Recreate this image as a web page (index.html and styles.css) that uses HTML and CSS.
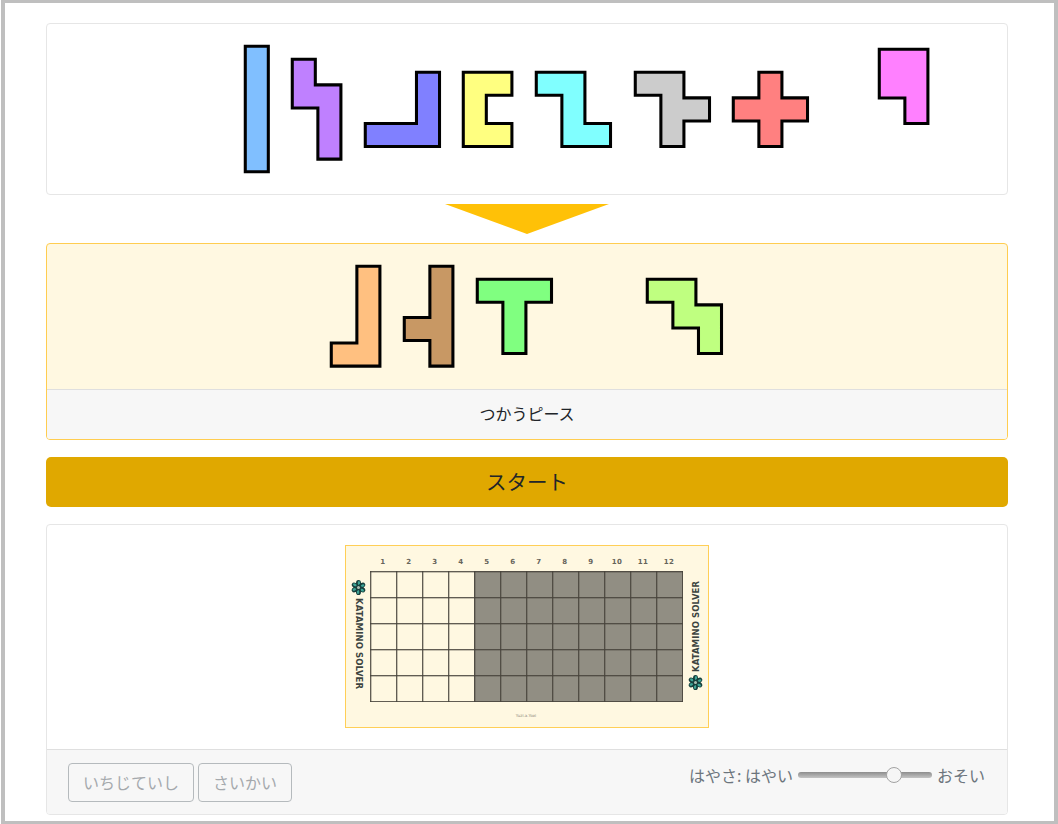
FILE: index.html
```html
<!DOCTYPE html>
<html lang="ja">
<head>
    <meta charset="UTF-8">
    <meta name="viewport" content="width=device-width, initial-scale=1.0">
    <title>Katamino Solver</title>
    <link rel="stylesheet" href="styles.css">
</head>
<body>

<!-- Flower used on both sides of the board -->
<svg class="defs" width="0" height="0">
    <symbol id="flower" viewBox="-10 -10 20 20">
        <g id="petals">
            <ellipse cx="0" cy="-5.5" rx="3.4" ry="4.5" fill="#173f3c"/>
            <ellipse cx="0.6" cy="-6" rx="1.6" ry="2.6" fill="#3fa596"/>
        </g>
        <use href="#petals" transform="rotate(60)"/>
        <use href="#petals" transform="rotate(120)"/>
        <use href="#petals" transform="rotate(180)"/>
        <use href="#petals" transform="rotate(240)"/>
        <use href="#petals" transform="rotate(300)"/>
        <circle r="2" fill="#a9bdb0"/>
    </symbol>
</svg>

<div class="frame">

    <!-- Unused pieces -->
    <div class="card">
        <div class="pieces pieces-all">
            <svg class="piece" width="25.6" height="128" viewBox="0 0 100 500"><polygon fill="#80bfff" points="5,5 95,5 95,495 5,495"/></svg>
            <svg class="piece" width="51.2" height="102.4" viewBox="0 0 200 400"><polygon fill="#bf80ff" points="5,5 95,5 95,105 195,105 195,395 105,395 105,195 5,195"/></svg>
            <svg class="piece" width="76.8" height="76.8" viewBox="0 0 300 300"><polygon fill="#8080ff" points="205,5 295,5 295,295 5,295 5,205 205,205"/></svg>
            <svg class="piece" width="51.2" height="76.8" viewBox="0 0 200 300"><polygon fill="#ffff80" points="5,5 195,5 195,95 95,95 95,205 195,205 195,295 5,295"/></svg>
            <svg class="piece" width="76.8" height="76.8" viewBox="0 0 300 300"><polygon fill="#80ffff" points="5,5 195,5 195,205 295,205 295,295 105,295 105,95 5,95"/></svg>
            <svg class="piece" width="76.8" height="76.8" viewBox="0 0 300 300"><polygon fill="#cccccc" points="5,5 195,5 195,105 295,105 295,195 195,195 195,295 105,295 105,95 5,95"/></svg>
            <svg class="piece" width="76.8" height="76.8" viewBox="0 0 300 300"><polygon fill="#ff8080" points="105,5 195,5 195,105 295,105 295,195 195,195 195,295 105,295 105,195 5,195 5,105 105,105"/></svg>
            <svg class="piece piece-raised" width="51.2" height="76.8" viewBox="0 0 200 300"><polygon fill="#ff80ff" points="5,5 195,5 195,295 105,295 105,195 5,195"/></svg>
        </div>
    </div>

    <div class="arrow"></div>

    <!-- Selected pieces -->
    <div class="card card-selected">
        <div class="pieces pieces-selected">
            <svg class="piece" width="51.2" height="102.4" viewBox="0 0 200 400"><polygon fill="#ffc080" points="105,5 195,5 195,395 5,395 5,305 105,305"/></svg>
            <svg class="piece" width="51.2" height="102.4" viewBox="0 0 200 400"><polygon fill="#c89864" points="105,5 195,5 195,395 105,395 105,295 5,295 5,205 105,205"/></svg>
            <svg class="piece" width="76.8" height="76.8" viewBox="0 0 300 300"><polygon fill="#80ff80" points="5,5 295,5 295,95 195,95 195,295 105,295 105,95 5,95"/></svg>
            <svg class="piece piece-apart" width="76.8" height="76.8" viewBox="0 0 300 300"><polygon fill="#bfff80" points="5,5 195,5 195,105 295,105 295,295 205,295 205,195 105,195 105,95 5,95"/></svg>
        </div>
        <div class="card-footer footer-center">つかうピース</div>
    </div>

    <button class="start-btn">スタート</button>

    <!-- Board -->
    <div class="card">
        <div class="board-wrap">
            <div class="board">
                <div class="side">
                    <svg class="flower" width="15" height="15"><use href="#flower"/></svg>
                    <span class="side-text">KATAMINO SOLVER</span>
                </div>
                <div class="board-main">
                    <div class="numbers">
                        <span>1</span><span>2</span><span>3</span><span>4</span><span>5</span><span>6</span>
                        <span>7</span><span>8</span><span>9</span><span>10</span><span>11</span><span>12</span>
                    </div>
                    <div class="grid"></div>
                    <div class="board-caption">Yuzi.a.Yoxi</div>
                </div>
                <div class="side side-right">
                    <svg class="flower" width="15" height="15"><use href="#flower"/></svg>
                    <span class="side-text">KATAMINO SOLVER</span>
                </div>
            </div>
        </div>
        <div class="card-footer controls">
            <div class="buttons">
                <button class="outline-btn" disabled>いちじていし</button>
                <button class="outline-btn" disabled>さいかい</button>
            </div>
            <div class="speed">
                <span>はやさ: はやい</span>
                <input type="range" class="speed-range" min="0" max="100" value="75">
                <span>おそい</span>
            </div>
        </div>
    </div>

</div>
</body>
</html>
```

FILE: styles.css
```css
/* General Styles */
* {
    box-sizing: border-box;
}

body {
    margin: 0;
    background: white;
    font-family: "Noto Sans CJK JP", "Liberation Sans", sans-serif;
    font-size: 16px;
    color: #212529;
}

.defs {
    display: block;
    height: 0;
}

.frame {
    margin-left: 1px;
    height: 824px;
    padding: 20px 46px 0 41px;
    border: 4px solid #bfbfbf;
    border-top-width: 3px;
    border-bottom-width: 3px;
    overflow: hidden;
}

/* Cards */
.card {
    background: white;
    border: 1px solid #e6e6e6;
    border-radius: 4px;
    overflow: hidden;
}

.card-selected {
    background: #fff8e1;
    border-color: #ffcd50;
}

.card-footer {
    background: #f7f7f7;
    border-top: 1px solid #dfdfdf;
}

.footer-center {
    height: 50px;
    line-height: 47px;
    text-align: center;
}

/* Pieces */
.pieces {
    display: flex;
    align-items: center;
    gap: 21.6px;
    padding: 21px 0;
}

.pieces-all {
    padding-left: 197px;
    height: 170px;
}

.pieces-selected {
    justify-content: center;
    height: 145px;
    padding-right: 1px;
}

.piece {
    display: block;
    flex: none;
    overflow: visible;
}

.piece polygon {
    stroke: #000;
    stroke-width: 12;
}

.piece-raised {
    align-self: flex-start;
    margin: 3px 0 0 47.6px;
}

.piece-apart {
    margin-left: 72px;
}

.arrow {
    width: 0;
    margin: 9px auto;
    border-top: 30px solid #ffc107;
    border-left: 82px solid transparent;
    border-right: 82px solid transparent;
}

/* Start Button */
.start-btn {
    display: block;
    width: 100%;
    height: 50px;
    margin: 17px 0;
    padding: 0 0 2px;
    background: #e0a800;
    border: none;
    border-radius: 5px;
    font-family: inherit;
    font-size: 20.5px;
    color: #212529;
}

/* Board */
.board-wrap {
    display: flex;
    justify-content: center;
    padding: 20px 0 21px;
}

.board {
    display: flex;
    width: 364px;
    height: 183px;
    padding: 1px;
    background: #fff8e1;
    border: 1px solid #ffcf57;
}

.side {
    display: flex;
    flex-direction: column;
    align-items: center;
    gap: 3px;
    width: 24px;
    padding-top: 33px;
}

.side-right {
    padding-top: 36px;
    margin-left: 2px;
    transform: rotate(180deg);
}

.flower {
    display: block;
    flex: none;
}

.side-text {
    writing-mode: vertical-rl;
    font-family: "DejaVu Sans", sans-serif;
    font-size: 8.5px;
    font-weight: bold;
    line-height: 12px;
    letter-spacing: 0.1px;
    white-space: nowrap;
    color: #3d4440;
}

.board-main {
    width: 312px;
}

.numbers {
    display: flex;
    height: 24px;
    padding-top: 11px;
}

.numbers span {
    width: 26px;
    font-family: "DejaVu Sans", sans-serif;
    font-size: 7px;
    line-height: 9px;
    letter-spacing: 0.5px;
    font-weight: bold;
    text-align: center;
    color: #66645b;
}

.grid {
    width: 313px;
    height: 131px;
    background:
        repeating-linear-gradient(90deg, rgba(70, 66, 58, 0.85) 0 1px, rgba(70, 66, 58, 0.3) 1px 2px, transparent 2px 26px),
        repeating-linear-gradient(180deg, rgba(70, 66, 58, 0.85) 0 1px, rgba(70, 66, 58, 0.3) 1px 2px, transparent 2px 26px),
        linear-gradient(90deg, #fff8e1 104px, #918e83 104px);
}

.board-caption {
    margin-top: 11px;
    font-family: "DejaVu Sans", sans-serif;
    font-size: 4px;
    line-height: 6px;
    text-align: center;
    color: #8f8b7c;
}

/* Controls */
.controls {
    display: flex;
    justify-content: space-between;
    align-items: center;
    height: 65px;
    padding: 0 22px 0 21px;
}

.buttons {
    display: flex;
    gap: 4px;
}

.outline-btn {
    height: 39px;
    padding: 0 14px;
    background: transparent;
    border: 1px solid #b5babd;
    border-radius: 4px;
    font-family: inherit;
    font-size: 16px;
    color: #a5a9ad;
}

.speed {
    display: flex;
    align-items: center;
    gap: 5px;
    margin-top: -14px;
    color: #6c757d;
}

.speed-range {
    -webkit-appearance: none;
    appearance: none;
    width: 134px;
    height: 16px;
    margin: 0;
    background: transparent;
}

.speed-range::-webkit-slider-runnable-track {
    height: 6px;
    background: linear-gradient(#8d8d8d, #c4c4c4);
    border-radius: 3px;
}

.speed-range::-webkit-slider-thumb {
    -webkit-appearance: none;
    width: 16px;
    height: 16px;
    margin-top: -5px;
    background: #f6f6f6;
    border: 1px solid #a3a3a3;
    border-radius: 50%;
}
```
